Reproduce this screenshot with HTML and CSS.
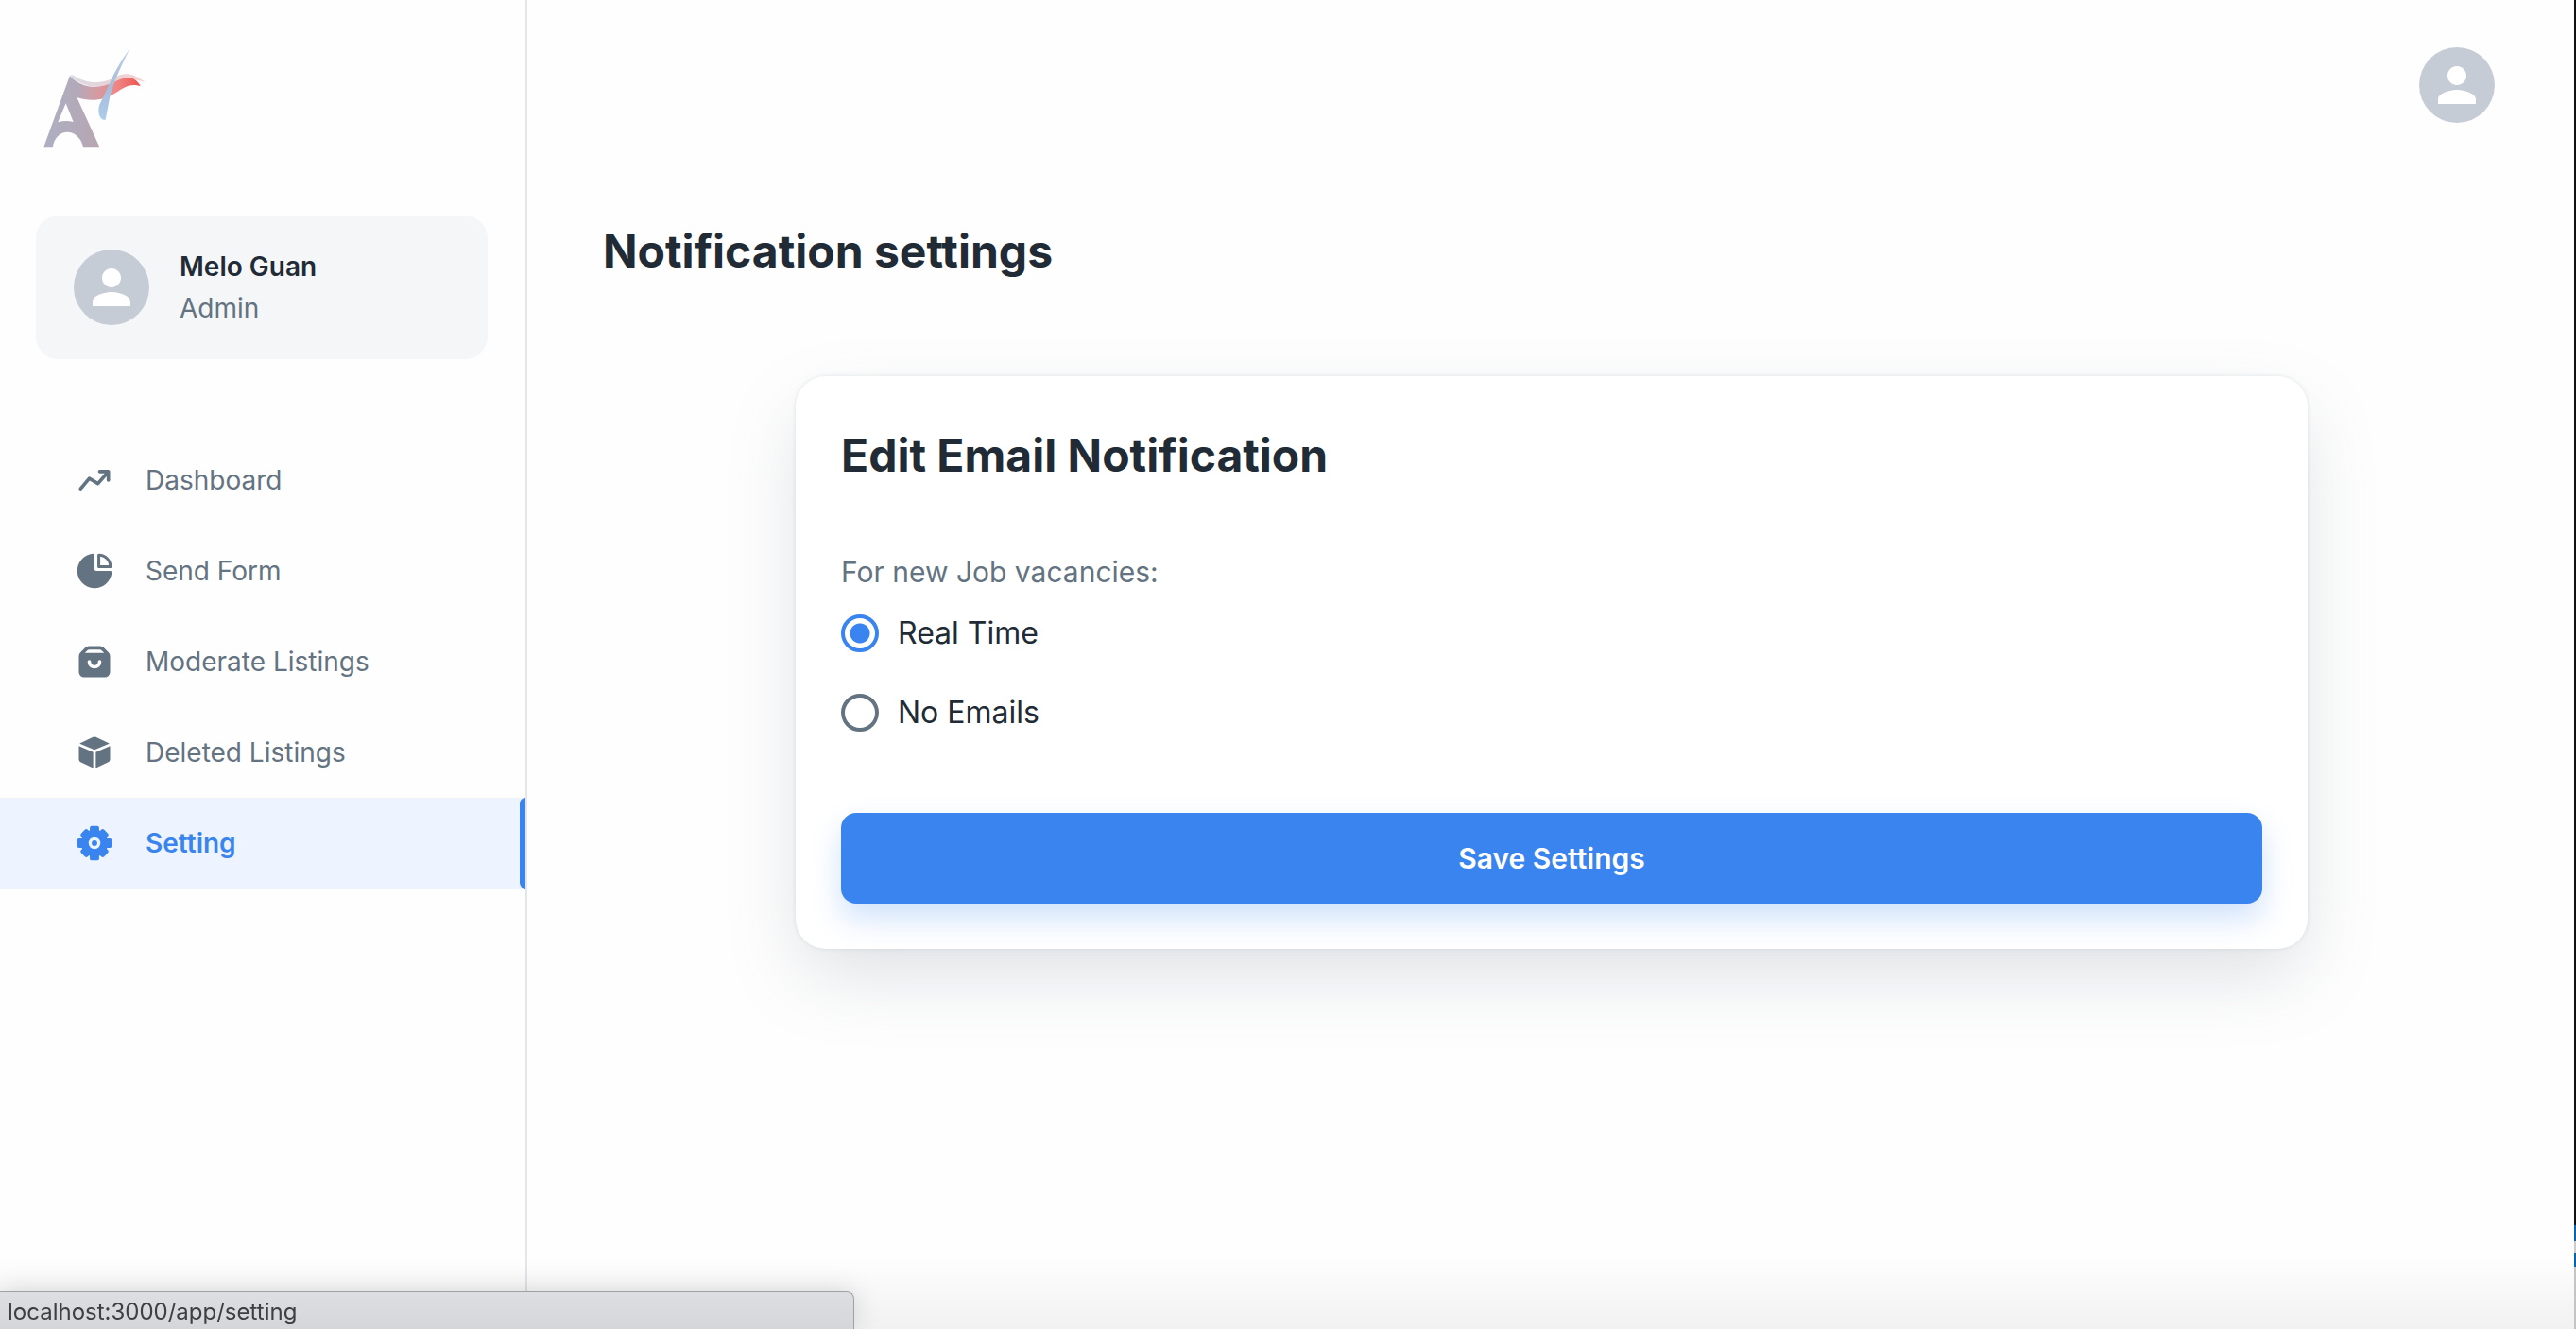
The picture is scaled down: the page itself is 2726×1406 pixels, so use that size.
FILE: index.html
```html
<!DOCTYPE html>
<html lang="en">
<head>
<meta charset="utf-8">
<title>Notification settings</title>
<link rel="stylesheet" href="styles.css">
</head>
<body>
<svg class="sprite" aria-hidden="true">
  <symbol id="person" viewBox="0 0 24 24"><path d="M12 12c2.210 0 4-1.790 4-4s-1.790-4-4-4-4 1.790-4 4 1.790 4 4 4zm0 2c-2.670 0-8 1.340-8 4v2h16v-2c0-2.660-5.330-4-8-4z"/></symbol>
</svg>
<div class="layout">
  <aside class="sidebar">
    <a class="logo" href="#" aria-label="Home">
      <svg viewBox="60 60 360 330">
        <defs>
          <linearGradient id="brand" gradientUnits="userSpaceOnUse" x1="80" y1="0" x2="386" y2="0">
            <stop offset="0" stop-color="#adb0c4"/><stop offset=".36" stop-color="#b5a8b8"/><stop offset=".55" stop-color="#d59ba2"/><stop offset=".75" stop-color="#ee8785"/><stop offset="1" stop-color="#ee5350"/>
          </linearGradient>
          <linearGradient id="letter" x1="0" x2="1" y1="0" y2="0">
            <stop offset="0" stop-color="#adafc3"/><stop offset="1" stop-color="#b7a6b2"/>
          </linearGradient>
          <linearGradient id="veil" gradientUnits="userSpaceOnUse" x1="160" y1="0" x2="400" y2="0">
            <stop offset="0" stop-color="#dcdbe3"/><stop offset=".45" stop-color="#e3d5da"/><stop offset="1" stop-color="#f8cfcf"/>
          </linearGradient>
          <linearGradient id="blade" x1="0" x2="0" y1="0" y2="1">
            <stop offset="0" stop-color="#bccfe6"/><stop offset=".55" stop-color="#a9bcd9"/><stop offset="1" stop-color="#abcdeb"/>
          </linearGradient>
        </defs>
        <path fill="url(#veil)" d="M160 152Q165 145 174 149C205 170 250 181 298 159C330 140 355 137 401 171C370 162 345 156 315 168C270 192 220 195 160 152Z"/>
        <path fill="url(#brand)" d="M161 152C205 190 248 195 298 172C340 151 369 149 386 184C358 173 337 184 308 204C270 230 225 233 184 219L166 215Z"/>
        <path fill="url(#letter)" fill-rule="evenodd" d="M161 152L194 180L184 219L257 379H205C190 313 116 313 107 379H78ZM149 238L124 298Q149 290 173 297Z"/>
        <path fill="url(#blade)" d="M351 65C325 103 306 133 292 166L256 242C250 261 253 283 268 290H275L289 216C306 154 329 113 351 65Z"/>
      </svg>
    </a>
    <a class="account" href="#">
      <span class="avatar"><svg><use href="#person"/></svg></span>
      <span class="account-text"><strong>Melo Guan</strong><span>Admin</span></span>
    </a>
    <nav class="nav">
      <a class="nav-item" href="#"><svg viewBox="0 0 24 24"><path d="M21 7a.78.78 0 0 0 0-.21.64.64 0 0 0-.05-.17 1.100 1.100 0 0 0-.09-.14.75.75 0 0 0-.14-.17l-.12-.07a.69.69 0 0 0-.19-.1h-.2A.7.7 0 0 0 20 6h-5a1 1 0 0 0 0 2h2.830l-4 4.710-4.320-2.570a1 1 0 0 0-1.280.22l-5 6a1 1 0 0 0 .13 1.410A1 1 0 0 0 4 18a1 1 0 0 0 .77-.36l4.450-5.340 4.270 2.560a1 1 0 0 0 1.270-.21L19 9.700V12a1 1 0 0 0 2 0V7z"/></svg>Dashboard</a>
      <a class="nav-item" href="#"><svg viewBox="0 0 24 24"><path d="M14.500 10.330h6.670A.83.83 0 0 0 22 9.500 7.500 7.500 0 0 0 14.500 2a.83.83 0 0 0-.83.83V9.500a.83.83 0 0 0 .83.83zm.83-6.600a5.830 5.830 0 0 1 4.940 4.940h-4.940z"/><path d="M21.080 12h-8.150a.91.91 0 0 1-.91-.91V2.920A.92.92 0 0 0 11 2a10 10 0 1 0 11 11 .92.92 0 0 0-.92-1z"/></svg>Send Form</a>
      <a class="nav-item" href="#"><svg viewBox="0 0 24 24"><path d="M20.120 6.710l-2.830-2.830A3 3 0 0 0 15.170 3H8.830a3 3 0 0 0-2.120.88L3.880 6.710A3 3 0 0 0 3 8.830V18a3 3 0 0 0 3 3h12a3 3 0 0 0 3-3V8.830a3 3 0 0 0-.88-2.120zM12 16a4 4 0 0 1-4-4 1 1 0 0 1 2 0 2 2 0 0 0 4 0 1 1 0 0 1 2 0 4 4 0 0 1-4 4zM6.410 7l1.710-1.710A1.050 1.050 0 0 1 8.830 5h6.340a1.050 1.050 0 0 1 .71.29L17.590 7z"/></svg>Moderate Listings</a>
      <a class="nav-item" href="#"><svg viewBox="0 0 24 24"><path d="M11.250 11.830L3 8.360v7.730a1.690 1.690 0 0 0 1 1.520L11.190 21h.06zm.75-1.310l8.510-3.570a1.620 1.620 0 0 0-.51-.38l-7.200-3.370a1.870 1.870 0 0 0-1.600 0L4 6.570a1.620 1.620 0 0 0-.51.38zm.75 1.310V21h.05l7.200-3.390a1.690 1.690 0 0 0 1-1.510V8.360z"/></svg>Deleted Listings</a>
      <a class="nav-item active" href="#" aria-current="page"><svg viewBox="0 0 24 24"><defs><mask id="hub"><path fill="#fff" d="M0 0h24v24H0z"/><circle cx="12" cy="12" r="3.400" fill="#000"/></mask></defs><g mask="url(#hub)"><circle cx="12" cy="12" r="7.800"/><rect x="9.300" y="2" width="5.400" height="20" rx="1.200"/><rect x="2" y="9.300" width="20" height="5.400" rx="1.200"/><g transform="rotate(45 12 12)"><rect x="9.300" y="2.600" width="5.400" height="18.800" rx="1.200"/><rect x="2.600" y="9.300" width="18.800" height="5.400" rx="1.200"/></g></g><circle cx="12" cy="12" r="1.600"/></svg>Setting</a>
    </nav>
  </aside>
  <div class="page">
    <header class="topbar"><button class="avatar" type="button" aria-label="Account"><svg><use href="#person"/></svg></button></header>
    <main class="content">
      <h1>Notification settings</h1>
      <form class="card">
        <h2>Edit Email Notification</h2>
        <fieldset>
          <legend>For new Job vacancies:</legend>
          <label><input type="radio" name="frequency" checked>Real Time</label>
          <label><input type="radio" name="frequency">No Emails</label>
        </fieldset>
        <button class="save" type="button">Save Settings</button>
      </form>
    </main>
  </div>
</div>
<div class="shade"></div>
<div class="edge"></div>
<div class="status">localhost:3000/app/setting</div>
</body>
</html>
```
FILE: styles.css
```css
* { box-sizing: border-box; }
body {
  margin: 0;
  font-family: Inter, "Liberation Sans", sans-serif;
  font-size: 28px;
  line-height: 44px;
  color: #212b36;
  background: #fefefe;
}
a { color: inherit; text-decoration: none; }
svg { display: block; fill: currentColor; }
h1, h2 { margin: 0; font-size: 48px; line-height: 72px; font-weight: 700; }
.sprite { position: absolute; width: 0; height: 0; }
.layout { display: flex; min-height: 100vh; }

.sidebar { width: 558px; flex: none; border-right: 2px solid #e3e7eb; padding-top: 50px; }
.logo { display: block; width: 120px; margin: 0 0 68px 40px; }
.logo svg { width: 120px; height: 110px; }
.account {
  display: flex; align-items: center; gap: 32px;
  margin: 0 40px 80px 38px; padding: 32px 40px;
  border-radius: 24px; background: #f4f6f8;
}
.account-text { display: flex; flex-direction: column; color: #637381; }
.account-text strong { font-weight: 600; color: #212b36; }
.avatar {
  display: grid; place-items: center; flex: none;
  width: 80px; height: 80px; padding: 0; border: 0; border-radius: 50%;
  background: #c6ccd5; color: #fff;
}
.avatar svg { width: 60px; height: 60px; }
.nav-item {
  display: flex; align-items: center; gap: 32px;
  height: 96px; padding-left: 78px; color: #637381;
}
.nav-item svg { width: 44px; height: 44px; }
.active { position: relative; font-weight: 600; color: #3a84ef; background: #edf4ff; }
.active::after {
  content: ""; position: absolute; inset: 0 0 0 auto;
  width: 6px; border-radius: 6px 0 0 6px; background: #3a84ef;
}

.page { flex: 1; }
.topbar { display: flex; justify-content: flex-end; padding: 50px 86px 0 0; }
.content { padding: 100px 80px 0; }
.card {
  max-width: 1600px; margin: 96px auto 0; padding: 48px;
  border-radius: 32px; background: #fff;
  box-shadow: 0 0 4px rgba(145, 158, 171, .24), 0 32px 80px -8px rgba(99, 115, 129, .22);
}
fieldset { margin: 64px 0 0; padding: 0; border: 0; font-size: 32px; }
legend { padding: 0; font-size: 30px; line-height: 46px; color: #637381; }
label { display: flex; align-items: center; gap: 20px; height: 84px; }
input {
  appearance: none; width: 40px; height: 40px; margin: 0;
  border: 4px solid #637381; border-radius: 50%;
}
input:checked { border-color: #3a84ef; background: radial-gradient(circle, #3a84ef 10px, transparent 11px); }
.save {
  width: 100%; height: 96px; margin-top: 64px; border: 0; border-radius: 16px;
  background: #3a84ef; color: #fff; font: 600 30px/44px Inter, "Liberation Sans", sans-serif;
  box-shadow: 0 16px 32px rgba(58, 132, 239, .24);
}

.edge {
  position: fixed; inset: 0 0 0 auto; width: 2px;
  background: linear-gradient(#111 1296px, #0864ac 1296px 1313px, #ccc 1313px 1326px, #0864ac 1326px 1340px, #c4c4c4 1340px);
}
.shade {
  position: fixed; inset: auto 0 0 0; height: 76px;
  background: linear-gradient(transparent, rgba(0, 0, 0, .05));
}
.status {
  position: fixed; left: 0; bottom: 0; width: 904px; height: 40px; padding-left: 8px;
  border: 1px solid #a0a1a5; border-width: 1px 1px 0 0; border-radius: 0 8px 0 0;
  background: linear-gradient(#dddee2, #d5d6da); color: #3c4043;
  font-size: 24px; line-height: 41px;
  box-shadow: 0 0 28px rgba(0, 0, 0, .15);
}
```
